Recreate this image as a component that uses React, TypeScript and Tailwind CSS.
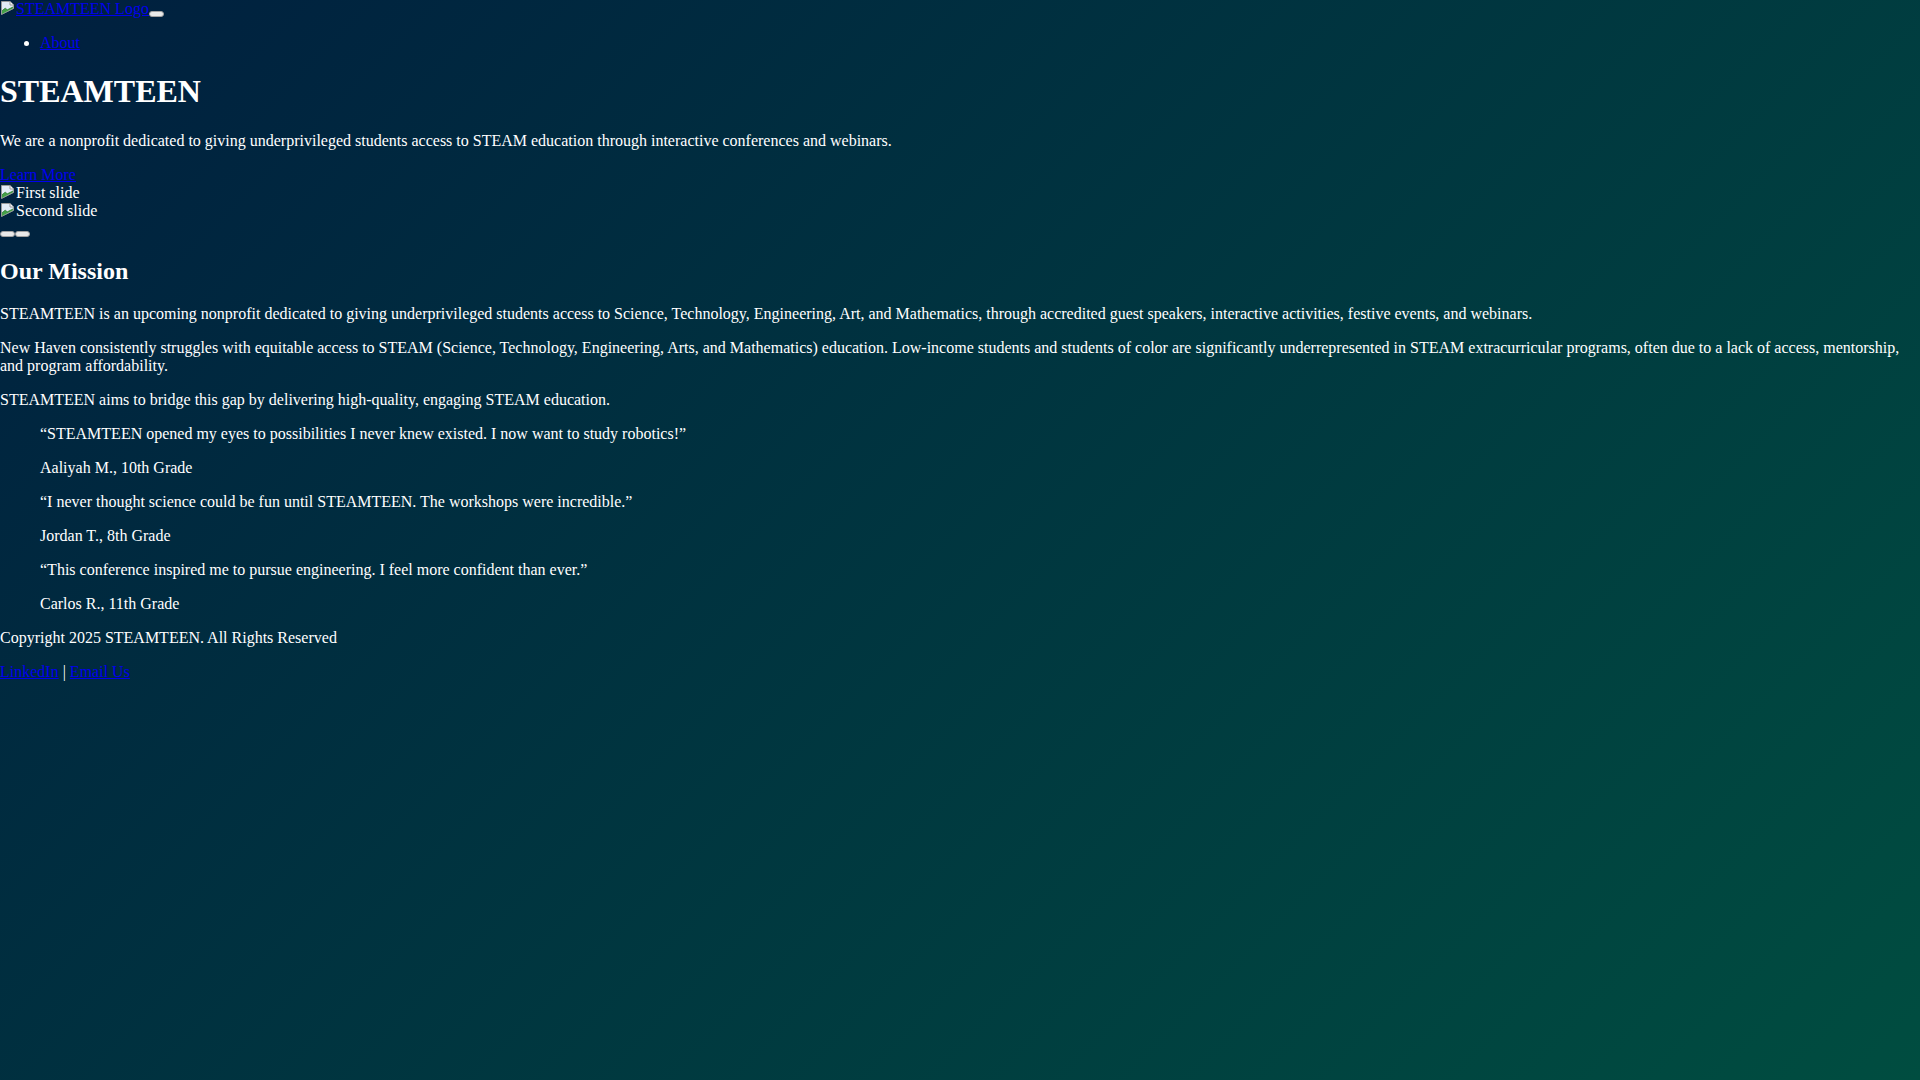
import React from "react";

// broken image placeholder, like the browser draws for a missing src
function BrokenImage() {
  return (
    <svg
      width="16"
      height="16"
      viewBox="0 0 16 16"
      className="inline-block align-[-2px]"
      aria-hidden="true"
    >
      <path
        d="M1.5 1.5H10L13.5 5V8.5L1.5 14.5Z"
        fill="#e3ecf8"
        stroke="#9a9a9a"
        strokeWidth="1"
      />
      <path d="M10 1.5V5H13.5" fill="#ffffff" stroke="#9a9a9a" strokeWidth="1" />
      <path d="M2 14V10.8L5.2 8.2L7.3 9.8L13 7V8.3L2 14Z" fill="#43a047" />
      <path d="M2 10.8L5.2 8.2L7.3 9.8L13 7" fill="none" stroke="#2e7d32" strokeWidth="0.8" />
    </svg>
  );
}

function DefaultButton({ label }: { label: string }) {
  return (
    <button
      type="button"
      aria-label={label}
      className="inline-block h-[6px] w-[15px] rounded-[3px] border border-[#a0a0a0] bg-[#e9e9e9] align-[-2px]"
    />
  );
}

const quotes = [
  {
    text: "“STEAMTEEN opened my eyes to possibilities I never knew existed. I now want to study robotics!”",
    who: "Aaliyah M., 10th Grade",
  },
  {
    text: "“I never thought science could be fun until STEAMTEEN. The workshops were incredible.”",
    who: "Jordan T., 8th Grade",
  },
  {
    text: "“This conference inspired me to pursue engineering. I feel more confident than ever.”",
    who: "Carlos R., 11th Grade",
  },
];

const link = "text-[#0000ee] underline";

export default function App() {
  return (
    <div className="min-h-screen bg-[linear-gradient(135deg,#001f3f,#004d40)] font-['Liberation_Serif','Times_New_Roman',serif] text-[16px] leading-[normal] text-white">
      <nav>
        <div>
          <a href="#" className={link}>
            <BrokenImage />
            STEAMTEEN Logo
          </a>
          <DefaultButton label="Toggle navigation" />
        </div>
        <ul className="my-4 list-disc pl-10">
          <li>
            <a href="#" className={link}>
              About
            </a>
          </li>
        </ul>
      </nav>

      <section>
        <h1 className="my-[21.44px] text-[32px] font-bold">STEAMTEEN</h1>
        <p className="my-4">
          We are a nonprofit dedicated to giving underprivileged students access to STEAM
          education through interactive conferences and webinars.
        </p>
        <a href="#" className={link}>
          Learn More
        </a>
      </section>

      <div>
        <div>
          <div>
            <BrokenImage />
            First slide
          </div>
          <div>
            <BrokenImage />
            Second slide
          </div>
        </div>
        <div>
          <DefaultButton label="Previous" />
          <DefaultButton label="Next" />
        </div>
      </div>

      <section>
        <h2 className="my-[19.92px] text-[24px] font-bold">Our Mission</h2>
        <p className="my-4">
          STEAMTEEN is an upcoming nonprofit dedicated to giving underprivileged students access
          to Science, Technology, Engineering, Art, and Mathematics, through accredited guest
          speakers, interactive activities, festive events, and webinars.
        </p>
        <p className="my-4">
          New Haven consistently struggles with equitable access to STEAM (Science, Technology,
          Engineering, Arts, and Mathematics) education. Low-income students and students of
          color are significantly underrepresented in STEAM extracurricular programs, often due
          to a lack of access, mentorship, and program affordability.
        </p>
        <p className="my-4">
          STEAMTEEN aims to bridge this gap by delivering high-quality, engaging STEAM education.
        </p>
      </section>

      <section>
        {quotes.map((q) => (
          <blockquote key={q.who} className="mx-10 my-4">
            <p className="my-4">{q.text}</p>
            <p className="my-4">{q.who}</p>
          </blockquote>
        ))}
      </section>

      <footer>
        <p className="my-4">Copyright 2025 STEAMTEEN. All Rights Reserved</p>
        <p className="my-4">
          <a href="#" className={link}>
            LinkedIn
          </a>{" "}
          |{" "}
          <a href="#" className={link}>
            Email Us
          </a>
        </p>
      </footer>
    </div>
  );
}
